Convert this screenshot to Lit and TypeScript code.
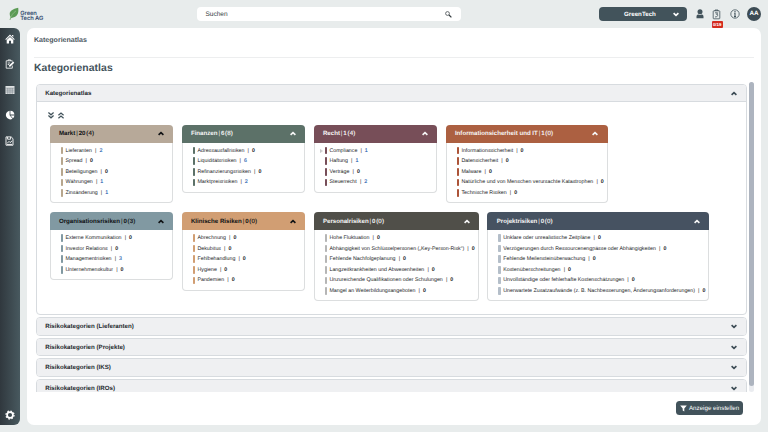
import { LitElement, html, css, svg } from "lit";
import { customElement, property } from "lit/decorators.js";

type Item = [string, number, boolean?];
interface Category {
  name: string;
  total: number;
  sub: number;
  head: string;
  bar: string;
  dark?: boolean;
  width: number;
  items: Item[];
}

const rows: Category[][] = [
  [
    { name: "Markt", total: 20, sub: 4, head: "#b7a999", bar: "#b7a68d", dark: true, width: 123.5,
      items: [["Lieferanten", 2], ["Spread", 0], ["Beteiligungen", 0], ["Währungen", 1], ["Zinsänderung", 1]] },
    { name: "Finanzen", total: 6, sub: 8, head: "#5c7168", bar: "#5c7168", width: 123.5,
      items: [["Adressausfallrisiken", 0], ["Liquiditätsrisiken", 6], ["Refinanzierungsrisiken", 0], ["Marktpreisrisiken", 2]] },
    { name: "Recht", total: 1, sub: 4, head: "#774e58", bar: "#774e58", width: 123.5,
      items: [["Compliance", 1, true], ["Haftung", 1], ["Verträge", 0], ["Steuerrecht", 2]] },
    { name: "Informationsicherheit und IT", total: 1, sub: 0, head: "#ac6041", bar: "#ac5438", width: 162,
      items: [["Informationssicherheit", 0], ["Datensicherheit", 0], ["Malware", 0], ["Natürliche und von Menschen verursachte Katastrophen", 0], ["Technische Risiken", 0]] },
  ],
  [
    { name: "Organisationsrisiken", total: 0, sub: 3, head: "#8199a2", bar: "#8199a2", dark: true, width: 123.5,
      items: [["Externe Kommunikation", 0], ["Investor Relations", 0], ["Managementrisiken", 3], ["Unternehmenskultur", 0]] },
    { name: "Klinische Risiken", total: 0, sub: 0, head: "#d19e73", bar: "#d19e73", dark: true, width: 123.5,
      items: [["Abrechnung", 0], ["Dekubitus", 0], ["Fehlbehandlung", 0], ["Hygiene", 0], ["Pandemien", 0]] },
    { name: "Personalrisiken", total: 0, sub: 0, head: "#504f49", bar: "#b5b5b5", width: 165.3,
      items: [["Hohe Fluktuation", 0], ["Abhängigkeit von Schlüsselpersonen („Key-Person-Risk“)", 0], ["Fehlende Nachfolgeplanung", 0], ["Langzeitkrankheiten und Abwesenheiten", 0], ["Unzureichende Qualifikationen oder Schulungen", 0], ["Mangel an Weiterbildungsangeboten", 0]] },
    { name: "Projektrisiken", total: 0, sub: 0, head: "#465261", bar: "#b4bec9", width: 222,
      items: [["Unklare oder unrealistische Zeitpläne", 0], ["Verzögerungen durch Ressourcenengpässe oder Abhängigkeiten", 0], ["Fehlende Meilensteinüberwachung", 0], ["Kostenüberschreitungen", 0], ["Unvollständige oder fehlerhafte Kostenschätzungen", 0], ["Unerwartete Zusatzaufwände (z. B. Nachbesserungen, Änderungsanforderungen)", 0]] },
  ],
];

const chevron = (up: boolean) => html`<svg width="6" height="5" viewBox="0 0 6 5" fill="none" stroke="currentColor" stroke-width="1.6">
  ${up ? svg`<path d="M.6 3.9 3 1.6 5.4 3.9"/>` : svg`<path d="M.6 1.1 3 3.4 5.4 1.1"/>`}
</svg>`;

@customElement("category-card")
export class CategoryCard extends LitElement {
  @property({ attribute: false }) category!: Category;

  static styles = css`
    :host { display: block; }
    .card { box-sizing: border-box; border: 1px solid #dcdedf; border-top: 0; border-radius: 4px; padding-bottom: 4px; background: #fff; }
    .head { display: flex; align-items: center; height: 18px; margin: 0 -1px 2.5px; padding: 0 9.3px; border-radius: 4px 4px 0 0; font-size: 6.15px; font-weight: 700; color: #f6f6f6; }
    .head.dark { color: #101214; }
    .head svg { margin-left: auto; flex: none; }
    .sep { font-weight: 400; margin: 0 0.9px; }
    .sub { font-weight: 400; margin-left: 0.7px; -webkit-text-stroke: 0.15px currentColor; letter-spacing: 0.15px; }
    .item { display: flex; align-items: center; height: 10.6px; white-space: nowrap; font-size: 5.29px; color: #1b1d1f; }
    .mark { width: 7px; margin-left: 3px; display: flex; justify-content: center; }
    .bar { width: 2.2px; height: 7.6px; border-radius: 0.8px; margin-right: 2.7px; }
    .pipe { margin: 0 3px 0 3.1px; }
    .zero { font-weight: 700; }
    .link { color: #1f5fb0; -webkit-text-stroke: 0.12px currentColor; }
  `;

  render() {
    const c = this.category;
    return html`<div class="card" style="width:${c.width}px">
      <div class="head ${c.dark ? "dark" : ""}" style="background:${c.head}">
        <span>${c.name}</span><span class="sep">|</span><span>${c.total}</span><span class="sub">(${c.sub})</span>
        ${chevron(true)}
      </div>
      ${c.items.map(([name, count, expandable]) => html`<div class="item">
        <span class="mark">${expandable ? html`<svg width="3" height="4" viewBox="0 0 3 4"><path d="M.5.6 2.4 2 .5 3.4Z" fill="none" stroke="#999" stroke-width=".5"/></svg>` : ""}</span>
        <span class="bar" style="background:${c.bar}"></span>
        <span>${name}</span><span class="pipe">|</span><span class=${count ? "link" : "zero"}>${count}</span>
      </div>`)}
    </div>`;
  }
}

@customElement("app-root")
export class AppRoot extends LitElement {
  static styles = css`
    :host { display: flex; flex-direction: column; width: 768px; height: 432px; overflow: hidden; background: #e8ecec; font-family: "Liberation Sans", Arial, sans-serif; color: #3f4f58; text-rendering: geometricPrecision; }
    .top { flex: none; height: 28px; display: flex; align-items: center; box-sizing: border-box; padding: 0 7px 0 9px; }
    .logo { display: flex; align-items: center; gap: 1.3px; width: 188px; }
    .brand { display: flex; flex-direction: column; font: 600 5.8px/5.3px Inter, sans-serif; color: #344c70; letter-spacing: -0.08px; margin-top: 4px; }
    .search { width: 264px; box-sizing: border-box; height: 14px; background: #fff; border-radius: 4px; display: flex; align-items: center; justify-content: space-between; padding: 0 9px 0 8.5px; font-size: 6.5px; color: #31383c; }
    .tenant { margin-left: 138px; width: 88px; box-sizing: border-box; height: 14px; background: #42535b; border-radius: 4px; color: #fff; display: flex; align-items: center; justify-content: space-between; padding: 0 8px 0 25px; font-size: 6.2px; font-weight: 700; }
    .tools { margin-left: auto; display: flex; align-items: center; gap: 8.2px; color: #42535b; }
    .tools svg { display: block; }
    .user { margin-right: 0.4px; }
    .tasks { position: relative; }
    .badge { position: absolute; left: -0.8px; top: 12px; width: 11px; height: 7.3px; border-radius: 1px; background: #d42b1f; color: #fff; font: 700 4.3px/7.3px "Liberation Sans", sans-serif; text-align: center; }
    .avatar { width: 14px; height: 14px; border-radius: 50%; background: #3c4b54; color: #fff; font-size: 6.3px; font-weight: 700; line-height: 14px; text-align: center; margin-left: -0.8px; }
    .body { flex: none; height: 397px; display: flex; gap: 7px; }
    .side { width: 20px; box-sizing: border-box; border-radius: 0 6px 6px 0; background: linear-gradient(90deg, #30383e, #48595f); display: flex; flex-direction: column; align-items: center; gap: 15.5px; padding: 5.5px 1px 5px 0; color: #fff; }
    .side svg { display: block; flex: none; }
    .gear { margin-top: auto; }
    .main { width: 734px; box-sizing: border-box; background: #fff; border-radius: 7px; padding: 0 7px; display: flex; flex-direction: column; }
    .crumb { height: 30px; box-sizing: border-box; padding-top: 7.5px; border-bottom: 1px solid #edeeef; font-size: 7.05px; line-height: 9px; font-weight: 700; color: #4c585f; }
    h1 { margin: 5px 0 0; height: 18px; font-size: 10.4px; line-height: 11px; font-weight: 700; letter-spacing: 0.05px; color: #43525b; }
    .view { height: 311px; display: flex; justify-content: space-between; overflow: hidden; }
    .panels { width: 711px; margin-left: 2px; padding-top: 3px; box-sizing: border-box; display: flex; flex-direction: column; gap: 2px; }
    .panel { flex: none; box-sizing: border-box; border: 1px solid #d7dbdf; border-radius: 4px; }
    .open { height: 231px; }
    .bar { display: flex; align-items: center; justify-content: space-between; box-sizing: border-box; height: 16.7px; background: #eff0f2; border-radius: 3px; padding: 0 9px 0 8.2px; font-size: 6.17px; font-weight: 700; color: #24292d; }
    .bar svg { color: #3b4b54; }
    .open .bar { height: 17px; border-bottom: 1px solid #d7dbdf; border-radius: 3px 3px 0 0; }
    .content { padding: 10px 12.6px 0; }
    .expand { display: flex; gap: 4px; height: 12.8px; margin-left: -1.8px; color: #42535b; }
    .row { display: flex; align-items: flex-start; gap: 8.5px; height: 87.4px; }
    .track { width: 5px; height: 310px; margin-top: 1px; border-radius: 3px; background: #eaecf0; }
    .thumb { height: 304px; border-radius: 3px; background: #adb4bf; }
    .foot { display: flex; justify-content: flex-end; padding: 9px 11px 0 0; }
    .filter { height: 14px; width: 67px; box-sizing: border-box; padding: 0; border: 0; border-radius: 3.5px; background: #42535b; color: #fff; font: 6.2px "Liberation Sans", Arial, sans-serif; display: flex; align-items: center; justify-content: center; gap: 2.2px; white-space: nowrap; text-rendering: geometricPrecision; }
  `;

  private closed(name: string) {
    return html`<section class="panel"><div class="bar"><span>${name}</span>${chevron(false)}</div></section>`;
  }

  render() {
    return html`
      <header class="top">
        <div class="logo">
          <svg width="10" height="14" viewBox="0 0 10 14"><path d="M9.2.8C9.8 5.5 9.3 10 2 11.2L1.2 13 .6 12.7C1 11.3 1.3 10.4 1.5 9.9-.8 5.2 2 2.5 9.2.8Z" fill="#5c9b55"/><path d="M1.2 12.5C2 8.5 4.2 5.8 7 3.9" fill="none" stroke="#a8cba2" stroke-width=".5"/></svg>
          <div class="brand"><span>Green</span><span>Tech AG</span></div>
        </div>
        <div class="search"><span>Suchen</span>
          <svg width="7" height="7" viewBox="0 0 7 7" fill="none" stroke="#31383c"><circle cx="2.5" cy="2.5" r="1.9" stroke-width=".7"/><path d="M4 4 6.4 6.4" stroke-width="1.2"/></svg>
        </div>
        <div class="tenant"><span>GreenTech</span>${chevron(false)}</div>
        <div class="tools">
          <svg class="user" width="8" height="10" viewBox="0 0 8 10" fill="currentColor"><circle cx="4" cy="2.7" r="2.5"/><path d="M.5 9.3V7.5C.5 6 1.6 5.5 2.5 5.5c.9.5 2.1.5 3 0 .9 0 2 .5 2 2v1.8Z"/></svg>
          <div class="tasks">
            <svg width="9" height="11" viewBox="0 0 9 11" fill="none" stroke="currentColor" stroke-width=".8"><rect x="1.2" y="1.8" width="6.6" height="8" rx=".7"/><path d="M3 1.9V1.1h3v.8" stroke-width="1"/><path d="M3 3.8h2.7L4.4 5.4h1.2v1.3L4.5 7.9H3" stroke-width=".8"/></svg>
            <span class="badge">0/19</span>
          </div>
          <svg width="10" height="10" viewBox="0 0 10 10" fill="none" stroke="currentColor"><circle cx="5" cy="5" r="4.2" stroke-width=".8"/><path d="M5 2v1.2M4.2 4.3H5V7.5M4 7.6h2" stroke-width="1.1"/></svg>
          <div class="avatar">AA</div>
        </div>
      </header>
      <div class="body">
        <nav class="side">
          <svg width="10" height="10" viewBox="0 0 10 10" fill="currentColor"><path d="M5 .6 9.7 5.2 9 5.9 5 2.1 1 5.9.3 5.2ZM7 1h1.3v2L7 1.8Z"/><path d="M1.7 6.1 5 3l3.3 3.1v3.3H6V6.8H4v2.6H1.7Z"/></svg>
          <svg width="10" height="10" viewBox="0 0 10 10" fill="none" stroke="currentColor" stroke-width=".8"><path d="M7.3 6.6V9.2H1.2V1.8h6.1v.8M3 1.8V.9h2.6v.9M2.7 4h2.4M2.7 5.5h1.5"/><path d="M4.3 7.3 8.7 3.2" stroke-width="1.7"/></svg>
          <svg width="10" height="10" viewBox="0 0 10 10"><rect x=".5" y="1" width="9" height="8" fill="#dfe2e3"/><path d="M.5 3.2h9M.5 5.1h9M.5 7h9M2.8 3v6M5 3v6M7.2 3v6" stroke="#657178" stroke-width=".5"/></svg>
          <svg width="10" height="10" viewBox="0 0 10 10" fill="currentColor"><path d="M4.6.8v4.5l2.9 3.4A4.3 4.3 0 1 1 4.6.8Z"/><path d="M5.4.7a4.3 4.3 0 0 1 4 3.9h-4ZM5.5 5.4h3.9A4 4 0 0 1 8 8.2Z"/></svg>
          <svg width="9" height="10" viewBox="0 0 9 10" fill="none" stroke="currentColor" stroke-width=".9"><path d="M1 .9h5.2L8 2.7v6.5H1ZM2.6 1v2.2h3V1"/><path d="M2.2 7.3 4 5.4l1.1 1.2L7.2 4.8M2 8.4h5"/></svg>
          <svg class="gear" width="10" height="10" viewBox="0 0 10 10" fill="none" stroke="currentColor"><circle cx="5" cy="5" r="2.9" stroke-width="1.7"/><circle cx="5" cy="5" r="4" stroke-width="1.3" stroke-dasharray="1.57 1.57"/></svg>
        </nav>
        <main class="main">
          <div class="crumb">Kategorienatlas</div>
          <h1>Kategorienatlas</h1>
          <div class="view">
            <div class="panels">
              <section class="panel open">
                <div class="bar"><span>Kategorienatlas</span>${chevron(true)}</div>
                <div class="content">
                  <div class="expand">
                    <svg width="6" height="7" viewBox="0 0 6 7" fill="none" stroke="currentColor" stroke-width="1.3"><path d="M.4.6 3 2.8 5.6.6M.4 3.5 3 5.8 5.6 3.5"/></svg>
                    <svg width="6" height="7" viewBox="0 0 6 7" fill="none" stroke="currentColor" stroke-width="1.3"><path d="M.4 3.3 3 1 5.6 3.3M.4 6.2 3 4 5.6 6.2"/></svg>
                  </div>
                  ${rows.map((row) => html`<div class="row">${row.map((c) => html`<category-card .category=${c}></category-card>`)}</div>`)}
                </div>
              </section>
              ${["Lieferanten", "Projekte", "IKS", "IROs"].map((n) => this.closed(`Risikokategorien (${n})`))}
            </div>
            <div class="track"><div class="thumb"></div></div>
          </div>
          <div class="foot">
            <button class="filter"><svg width="7" height="7" viewBox="0 0 7 7" fill="currentColor"><path d="M.2.6h6.6L4.3 3.6v2.8L2.7 5.5V3.6Z"/></svg>Anzeige einstellen</button>
          </div>
        </main>
      </div>
    `;
  }
}
